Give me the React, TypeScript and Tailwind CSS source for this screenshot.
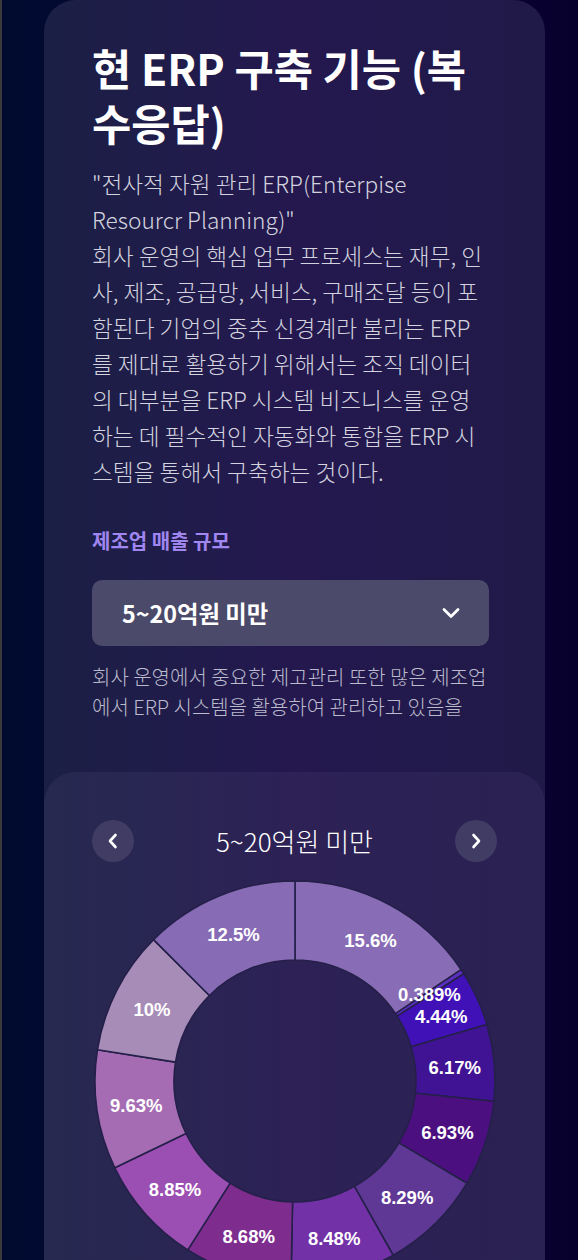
import React from "react";

const data = [
  { v: 15.6, label: "15.6%", c: "#886cb5" },
  { v: 0.389, label: "0.389%", c: "#5b2ec0" },
  { v: 4.44, label: "4.44%", c: "#4111b8" },
  { v: 6.17, label: "6.17%", c: "#3f1393" },
  { v: 6.93, label: "6.93%", c: "#4b0f80" },
  { v: 8.29, label: "8.29%", c: "#5f3795" },
  { v: 8.48, label: "8.48%", c: "#7331a8" },
  { v: 8.68, label: "8.68%", c: "#7e2d8e" },
  { v: 8.85, label: "8.85%", c: "#9c4fb3" },
  { v: 9.63, label: "9.63%", c: "#a56cb4" },
  { v: 10, label: "10%", c: "#a88cb8" },
  { v: 12.5, label: "12.5%", c: "#876bb5" },
];

function Donut() {
  const cx = 200;
  const cy = 200;
  const R = 200;
  const r = 121;
  const total = data.reduce((s, d) => s + d.v, 0);
  let acc = 0;
  const pt = (rad: number, a: number) => [cx + rad * Math.sin(a), cy - rad * Math.cos(a)];
  const segs = data.map((d) => {
    const a0 = (acc / total) * Math.PI * 2;
    acc += d.v;
    const a1 = (acc / total) * Math.PI * 2;
    const large = a1 - a0 > Math.PI ? 1 : 0;
    const [ox0, oy0] = pt(R, a0);
    const [ox1, oy1] = pt(R, a1);
    const [ix1, iy1] = pt(r, a1);
    const [ix0, iy0] = pt(r, a0);
    const path = `M${ox0} ${oy0} A${R} ${R} 0 ${large} 1 ${ox1} ${oy1} L${ix1} ${iy1} A${r} ${r} 0 ${large} 0 ${ix0} ${iy0} Z`;
    const am = (a0 + a1) / 2;
    const [lx, ly] = pt((R + r) / 2, am);
    return { path, lx, ly, d };
  });
  return (
    <svg width={400} height={400} viewBox="0 0 400 400" className="mx-auto mt-[19px] block overflow-visible">
      {segs.map((s, i) => (
        <path key={i} d={s.path} fill={s.d.c} stroke="#25204a" strokeWidth={1.6} strokeLinejoin="round" />
      ))}
      {segs.map((s, i) => (
        <text
          key={"t" + i}
          x={s.lx}
          y={s.ly + 1.5}
          textAnchor="middle"
          dominantBaseline="central"
          fill="#ffffff"
          style={{ fontFamily: '"Liberation Sans", Arial, sans-serif', fontWeight: 700, fontSize: "18.5px" }}
        >
          {s.d.label}
        </text>
      ))}
    </svg>
  );
}

export default function App() {
  return (
    <div
      className="flex min-h-[1400px] w-full border-l-2 border-[#3a3a3a] bg-linear-to-r from-[#000a2e] via-[#0e0640] to-[#08002c]"
      style={{ fontFamily: '"Noto Sans CJK KR", "Noto Sans", sans-serif' }}
    >
      <div className="ml-[42px] w-[501px] rounded-t-[32px] bg-linear-to-r from-[#1b1f45] via-[#24184f] to-[#201a48]">
        <div className="pl-[48px] pt-[40px]">
          <h1 className="w-[405px] text-[42.67px] font-bold leading-[55px] text-white">현 ERP 구축 기능 (복수응답)</h1>
          <div className="mt-[16px] w-[399px] text-[22.67px] font-light leading-[36px] text-[#d3d3df]">
            <p>"전사적 자원 관리 ERP(Enterpise Resourcr Planning)"</p>
            <p>
              회사 운영의 핵심 업무 프로세스는 재무, 인사, 제조, 공급망, 서비스, 구매조달 등이 포함된다 기업의 중추 신경계라 불리는 ERP를 제대로 활용하기 위해서는 조직 데이터의 대부분을 ERP 시스템 비즈니스를 운영하는 데 필수적인 자동화와 통합을 ERP 시스템을 통해서 구축하는 것이다.
            </p>
          </div>
          <div className="mt-[37px] text-[20px] font-bold leading-[28px] text-[#a086f0]">제조업 매출 규모</div>
          <div className="mt-[25px] flex h-[66px] w-[397px] items-center justify-between rounded-[10px] bg-[#4c4a6b] pl-[30px] pr-[28px]">
            <span className="text-[23.33px] font-bold text-white">5~20억원 미만</span>
            <svg width="20" height="12" viewBox="0 0 20 12" fill="none">
              <path d="M3 2.5 L10 9.5 L17 2.5" stroke="#ffffff" strokeWidth="2.8" strokeLinecap="round" strokeLinejoin="round" />
            </svg>
          </div>
          <p className="mt-[16px] w-[399px] text-[20px] font-light leading-[30px] text-[#bcbbcd]">
            회사 운영에서 중요한 제고관리 또한 많은 제조업에서 ERP 시스템을 활용하여 관리하고 있음을
          </p>
        </div>
        <div className="mt-[50px] rounded-[32px] bg-linear-to-r from-[#262950] via-[#2d2156] to-[#2a2252] pb-[60px] pt-[48px]">
          <div className="flex items-center justify-between px-[48px]">
            <button className="flex h-[42px] w-[42px] items-center justify-center rounded-full bg-[#413c63]">
              <svg width="14" height="16" viewBox="0 0 14 16" fill="none">
                <path d="M9.5 2 L4 8 L9.5 14" stroke="#ffffff" strokeWidth="2.6" strokeLinecap="round" strokeLinejoin="round" />
              </svg>
            </button>
            <div className="text-[26px] font-light leading-[34px] text-white">5~20억원 미만</div>
            <button className="flex h-[42px] w-[42px] items-center justify-center rounded-full bg-[#413c63]">
              <svg width="14" height="16" viewBox="0 0 14 16" fill="none">
                <path d="M4.5 2 L10 8 L4.5 14" stroke="#ffffff" strokeWidth="2.6" strokeLinecap="round" strokeLinejoin="round" />
              </svg>
            </button>
          </div>
          <Donut />
        </div>
      </div>
    </div>
  );
}
